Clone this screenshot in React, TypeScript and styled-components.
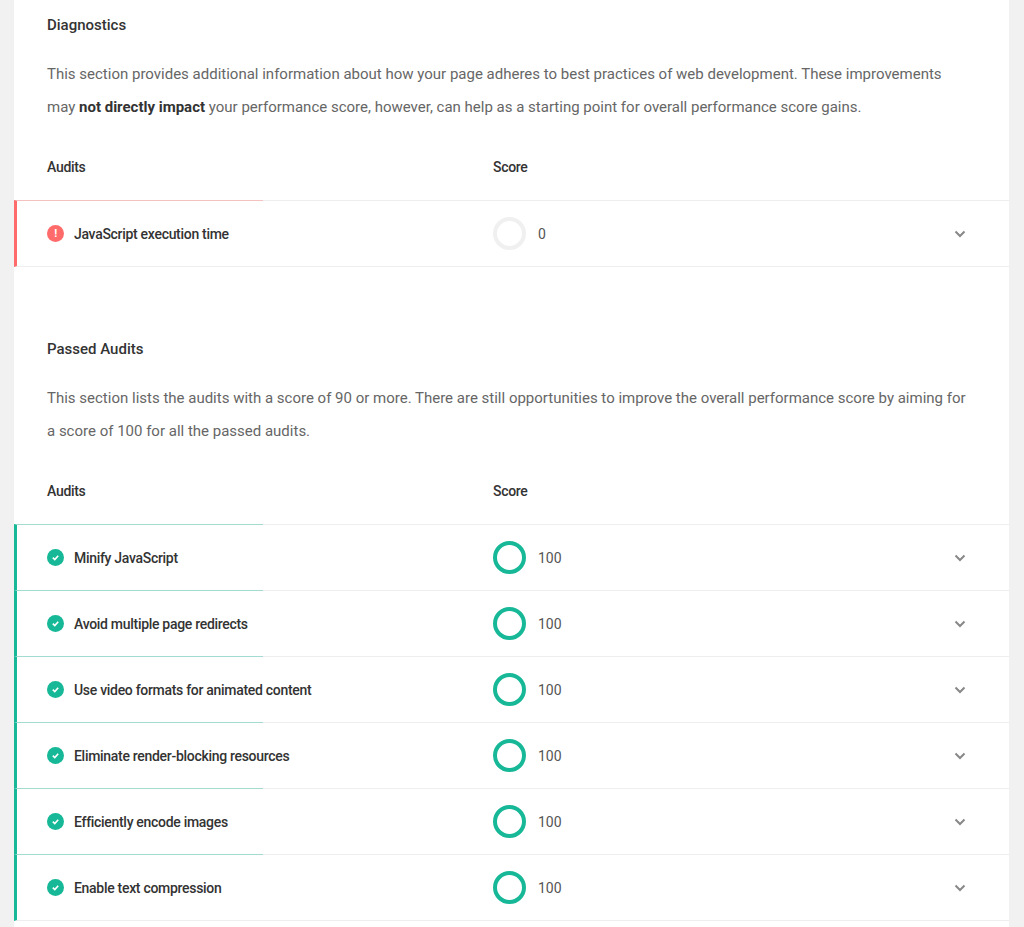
import React from "react";
import styled, { createGlobalStyle } from "styled-components";

const Global = createGlobalStyle`
  html, body { margin: 0; background: #f1f1f1; font-family: Roboto, "Noto Sans", sans-serif; }
`;
const Panel = styled.div`
  margin: 0 15px 0 14px; background: #fff; padding-top: 15px; min-height: 927px;
`;
const Section = styled.section<{ $gap?: number }>`
  margin-top: ${p => p.$gap || 0}px;
`;
const Title = styled.h2`
  margin: 0; padding: 0 33px; font-size: 15px; line-height: 20px; font-weight: 500; color: #333;
`;
const Desc = styled.p`
  margin: 23px 0 10px; padding: 0 40px 0 33px; font-size: 15px; line-height: 33px; color: #666;
  b { color: #333; font-weight: 700; }
`;
const Header = styled.div`
  display: grid; grid-template-columns: 446px 1fr; height: 66px; align-items: center;
  padding-left: 33px; font-size: 14px; font-weight: 500; color: #333; letter-spacing: -0.3px;
`;
const Row = styled.div<{ $c: string; $last?: boolean }>`
  position: relative; display: grid; grid-template-columns: 446px 1fr 40px; align-items: center;
  height: 65px; border-top: 1px solid #eee; ${p => p.$last ? "border-bottom: 1px solid #eee;" : ""}
  border-left: 3px solid ${p => p.$c}; padding-left: 30px; padding-right: 15px;
  font-size: 14px; font-weight: 500; color: #333; letter-spacing: -0.3px;
  &::before { content: ""; position: absolute; top: -1px; left: -3px; width: 249px; height: 1px; background: ${p => p.$c}; opacity: .35; }
`;
const Name = styled.div` display: flex; align-items: center; gap: 10px; `;
const Dot = styled.span<{ $c: string }>`
  width: 17px; height: 17px; border-radius: 50%; background: ${p => p.$c}; display: flex; align-items: center; justify-content: center;
  color: #fff; font-size: 11px; font-weight: 700;
`;
const Score = styled.div` display: flex; align-items: center; gap: 12px; font-weight: 400; color: #555; font-size: 14px; letter-spacing: 0; `;
const Ring = styled.span<{ $c: string }>`
  width: 25px; height: 25px; border-radius: 50%; border: 4px solid ${p => p.$c};
`;

const GREEN = "#17b897", RED = "#ff6b6b";
const Chevron = () => (
  <svg width="12" height="8" viewBox="0 0 12 8"><path d="M1.5 1.5 6 6l4.5-4.5" stroke="#888" strokeWidth="2" fill="none" /></svg>
);
const Check = () => (
  <svg width="9" height="9" viewBox="0 0 10 10"><path d="M2 5.2 4.2 7.3 8 3" stroke="#fff" strokeWidth="1.8" fill="none" /></svg>
);

const passed = ["Minify JavaScript", "Avoid multiple page redirects", "Use video formats for animated content", "Eliminate render-blocking resources", "Efficiently encode images", "Enable text compression"];

export default function App() {
  return (
    <>
      <Global />
      <Panel>
        <Section>
          <Title>Diagnostics</Title>
          <Desc>This section provides additional information about how your page adheres to best practices of web development. These improvements may <b>not directly impact</b> your performance score, however, can help as a starting point for overall performance score gains.</Desc>
          <Header><span>Audits</span><span>Score</span></Header>
          <Row $c={RED} $last>
            <Name><Dot $c={RED}>!</Dot>JavaScript execution time</Name>
            <Score><Ring $c="#f0f0f0" />0</Score>
            <Chevron />
          </Row>
        </Section>
        <Section $gap={72}>
          <Title>Passed Audits</Title>
          <Desc>This section lists the audits with a score of 90 or more. There are still opportunities to improve the overall performance score by aiming for a score of 100 for all the passed audits.</Desc>
          <Header><span>Audits</span><span>Score</span></Header>
          {passed.map((n, i) => (
            <Row key={n} $c={GREEN} $last={i === passed.length - 1}>
              <Name><Dot $c={GREEN}><Check /></Dot>{n}</Name>
              <Score><Ring $c={GREEN} />100</Score>
              <Chevron />
            </Row>
          ))}
        </Section>
      </Panel>
    </>
  );
}
